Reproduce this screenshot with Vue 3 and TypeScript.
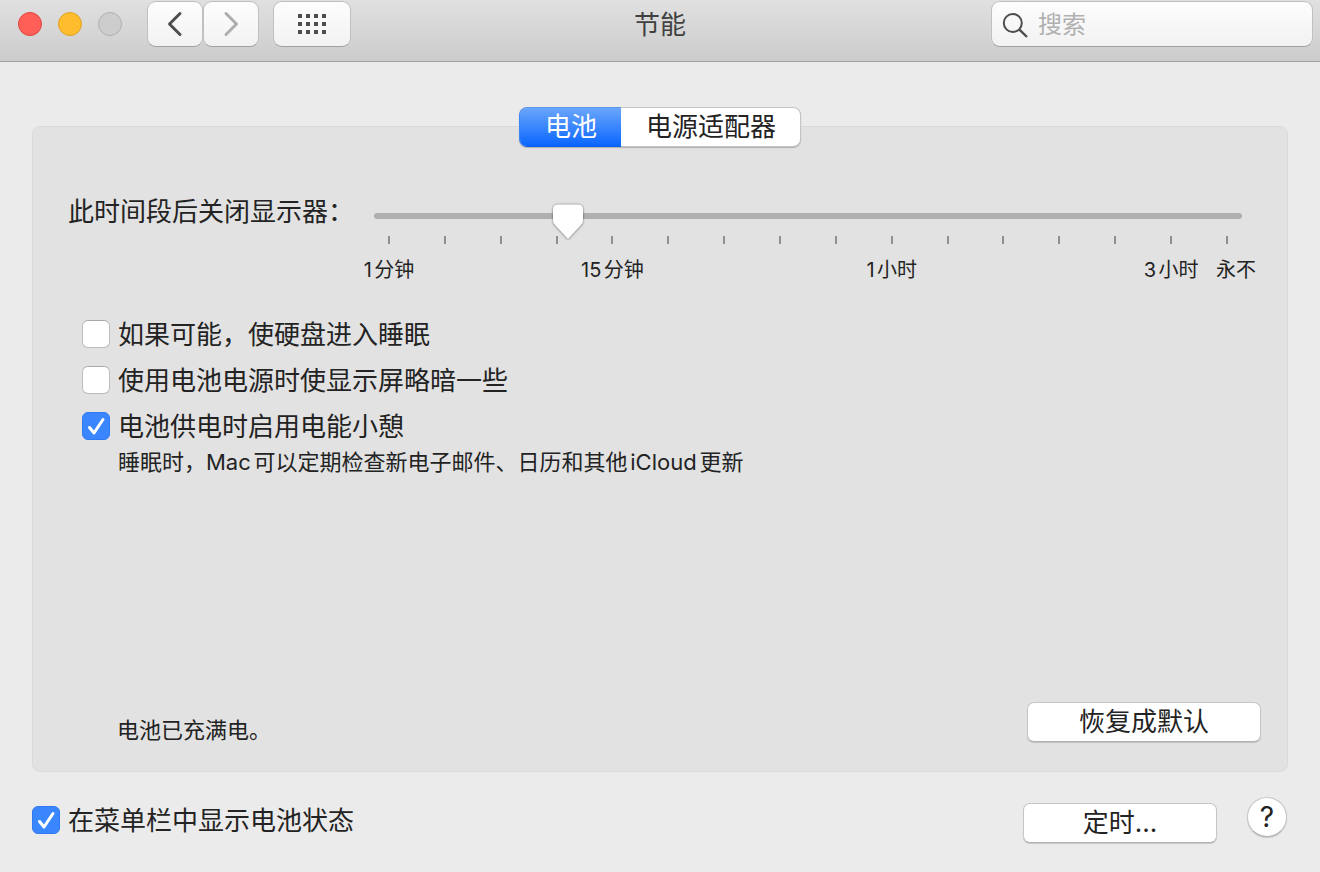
<script setup lang="ts">
import { ref } from 'vue'

interface Option {
  id: string
  label: string
  checked: boolean
  note?: string
}

const tabs: string[] = ['电池', '电源适配器']
const activeTab = ref(0)
const query = ref('')
const delay = ref(3.2)
const showStatus = ref(true)

const tickLabels: Record<number, string> = {
  0: '1分钟',
  4: '15分钟',
  9: '1小时',
  14: '3小时',
  15: '永不',
}
const ticks = Array.from({ length: 16 }, (_, i) => ({ id: i, label: tickLabels[i] ?? '' }))

const options = ref<Option[]>([
  { id: 'disk', label: '如果可能，使硬盘进入睡眠', checked: false },
  { id: 'dim', label: '使用电池电源时使显示屏略暗一些', checked: false },
  {
    id: 'nap',
    label: '电池供电时启用电能小憩',
    checked: true,
    note: '睡眠时，Mac可以定期检查新电子邮件、日历和其他iCloud更新',
  },
])

const dots = Array.from({ length: 12 }, (_, i) => ({ x: (i % 4) * 8, y: Math.floor(i / 4) * 8 }))
</script>

<template>
  <div class="window">
    <header class="toolbar">
      <div class="controls">
        <div class="lights">
          <button class="light red" type="button" aria-label="关闭"></button>
          <button class="light yellow" type="button" aria-label="最小化"></button>
          <button class="light gray" type="button" aria-label="缩放" disabled></button>
        </div>
        <div class="nav">
          <button class="tool" type="button" aria-label="后退">
            <svg width="16" height="26" viewBox="0 0 16 26" fill="none" stroke="#4d4d4d" stroke-width="3" stroke-linecap="round" stroke-linejoin="round">
              <path d="M13 2.5 2.5 13 13 23.5" />
            </svg>
          </button>
          <button class="tool" type="button" aria-label="前进">
            <svg width="16" height="26" viewBox="0 0 16 26" fill="none" stroke="#adadad" stroke-width="3" stroke-linecap="round" stroke-linejoin="round">
              <path d="M3 2.5 13.5 13 3 23.5" />
            </svg>
          </button>
        </div>
        <button class="tool wide" type="button" aria-label="全部显示">
          <svg width="28" height="20" viewBox="0 0 28 20" fill="#4d4d4d" shape-rendering="crispEdges">
            <rect v-for="(d, i) in dots" :key="i" :x="d.x" :y="d.y" width="4" height="4" />
          </svg>
        </button>
      </div>
      <h1 class="title">节能</h1>
      <label class="search">
        <svg width="28" height="28" viewBox="0 0 28 28" fill="none" stroke="#4d4d4d" stroke-width="2">
          <circle cx="10.800" cy="13" r="9" />
          <path d="M17.200 19.400 25 27" stroke-width="2.400" />
        </svg>
        <input v-model="query" type="text" placeholder="搜索" aria-label="搜索" />
      </label>
    </header>

    <main class="content">
      <div class="tabs" role="tablist">
        <button
          v-for="(tab, i) in tabs"
          :key="tab"
          class="tab"
          :class="{ active: i === activeTab }"
          type="button"
          role="tab"
          :aria-selected="i === activeTab"
          @click="activeTab = i"
        >{{ tab }}</button>
      </div>

      <section class="panel">
        <div class="delay">
          <label class="delay-label" for="delay">此时间段后关闭显示器：</label>
          <div class="slider">
            <input id="delay" v-model.number="delay" type="range" min="0" max="15" step="0.1" />
            <div class="ticks">
              <div v-for="t in ticks" :key="t.id" class="tick">
                <span class="mark"></span>
                <span v-if="t.label" class="tick-label">{{ t.label }}</span>
              </div>
            </div>
          </div>
        </div>

        <div class="options">
          <div v-for="o in options" :key="o.id" class="option">
            <label class="check">
              <input v-model="o.checked" type="checkbox" />
              <span>{{ o.label }}</span>
            </label>
            <p v-if="o.note" class="note">{{ o.note }}</p>
          </div>
        </div>

        <div class="panel-foot">
          <p class="status">电池已充满电。</p>
          <button class="push restore" type="button">恢复成默认</button>
        </div>
      </section>
    </main>

    <footer class="foot">
      <label class="check">
        <input v-model="showStatus" type="checkbox" />
        <span>在菜单栏中显示电池状态</span>
      </label>
      <div class="foot-actions">
        <button class="push schedule" type="button">定时...</button>
        <button class="help" type="button" aria-label="帮助">?</button>
      </div>
    </footer>
  </div>
</template>

<style>
body {
  margin: 0;
  background: #ebebeb;
}
</style>

<style scoped>
.window {
  box-sizing: border-box;
  display: flex;
  flex-direction: column;
  min-height: 100vh;
  background: #ebebeb;
  color: #232323;
  font-family: Inter, "Noto Sans CJK SC", sans-serif;
  font-size: 26px;
  line-height: 32px;
  text-autospace: normal;
}
.window *,
.window *::before {
  box-sizing: border-box;
}
button,
input {
  margin: 0;
  padding: 0;
  border: 0;
  font: inherit;
  color: inherit;
}
p,
h1 {
  margin: 0;
}

.toolbar {
  display: grid;
  grid-template-columns: 1fr auto 1fr;
  align-items: start;
  height: 62px;
  padding-top: 1px;
  background: linear-gradient(#e0e0e0, #cccccc);
  border-bottom: 1px solid #a3a3a3;
}
.controls {
  display: flex;
  align-items: center;
  padding-left: 18px;
}
.lights {
  display: flex;
  gap: 16px;
  margin-right: 25px;
}
.light {
  width: 24px;
  height: 24px;
  border: 1px solid;
  border-radius: 50%;
}
.red {
  background: #ff5f57;
  border-color: #e0443e;
}
.yellow {
  background: #ffbd2e;
  border-color: #dea123;
}
.gray {
  background: #cdcdcd;
  border-color: #b0b0b0;
}
.nav {
  display: flex;
  margin-right: 14px;
}
.tool {
  display: flex;
  align-items: center;
  justify-content: center;
  width: 56px;
  height: 46px;
  border: 1px solid #c0c0c0;
  border-bottom-color: #a0a0a0;
  border-radius: 9px;
  background: linear-gradient(#fdfdfd, #f2f2f2);
}
.tool svg {
  display: block;
}
.wide {
  width: 78px;
}
.title {
  padding-top: 8px;
  font-size: 26px;
  font-weight: 400;
  color: #404040;
}
.search {
  justify-self: end;
  display: flex;
  align-items: center;
  gap: 8px;
  width: 322px;
  height: 46px;
  margin-right: 7px;
  padding: 0 10px;
  border: 1px solid #c0c0c0;
  border-bottom-color: #a0a0a0;
  border-radius: 9px;
  background: linear-gradient(#fdfdfd, #f2f2f2);
}
.search svg {
  flex: none;
}
.search input {
  flex: 1;
  min-width: 0;
  height: 36px;
  background: transparent;
  outline: none;
  font-size: 24px;
}
.search input::placeholder {
  color: #b0b0b0;
  opacity: 1;
}

.content {
  flex: 1;
  display: flex;
  flex-direction: column;
  padding: 46px 32px 0;
}
.tabs {
  position: relative;
  z-index: 1;
  align-self: center;
  display: flex;
  height: 38px;
  border-radius: 7px;
  box-shadow: 0 0 0 1px #c4c4c4, 0 1px 1px 1px #b0b0b0;
}
.tab {
  padding: 0 24px 0 25px;
  background: #ffffff;
}
.tab:first-child {
  border-radius: 7px 0 0 7px;
}
.tab:last-child {
  border-radius: 0 7px 7px 0;
}
.tab.active {
  color: #ffffff;
  background: linear-gradient(#6aa6fb, #0a66ff);
  box-shadow: -1px 0 0 #3f86f5, 0 1px 0 #0a5fee, 0 -1px 0 #5a98f0;
}

.panel {
  flex: 1;
  display: flex;
  flex-direction: column;
  margin-top: -20px;
  padding: 69px 26px 29px 35px;
  border: 1px solid #dadada;
  border-radius: 8px;
  background: #e2e2e2;
}
.delay {
  display: flex;
  align-items: flex-start;
  gap: 20px;
  padding-right: 19px;
}
.delay-label {
  flex: none;
}
.slider {
  flex: 1;
  min-width: 0;
  padding-top: 8px;
}
.slider input {
  display: block;
  width: 100%;
  height: 24px;
  appearance: none;
  background: transparent;
  outline: none;
}
.slider input::-webkit-slider-runnable-track {
  height: 6px;
  border-radius: 3px;
  background: #afafaf;
}
.slider input::-webkit-slider-thumb {
  appearance: none;
  width: 30px;
  height: 35px;
  margin-top: -9px;
  border: 0;
  background: url("data:image/svg+xml,%3Csvg xmlns='http://www.w3.org/2000/svg' width='30' height='35' viewBox='0 0 30 35'%3E%3Cpath d='M5 .5h20q5 0 5 5v11q0 2.500-1.800 4.300L16 34q-1 1-2 0L1.800 20.800Q0 19 0 16.500V5.500Q0 .5 5 .5z' fill='%23fff'/%3E%3C/svg%3E") no-repeat;
  filter: drop-shadow(0 0 1px rgba(0, 0, 0, 0.45)) drop-shadow(0 1px 1px rgba(0, 0, 0, 0.15));
}
.ticks {
  display: flex;
  justify-content: space-between;
  height: 56px;
  padding: 8px 14px 0;
}
.tick {
  display: flex;
  flex-direction: column;
  align-items: center;
  width: 2px;
}
.mark {
  width: 2px;
  height: 8px;
  background: #8f8f8f;
}
.tick-label {
  padding-top: 12px;
  font-size: 20px;
  line-height: 28px;
  white-space: nowrap;
}
.tick:last-child .tick-label {
  padding-left: 18px;
}

.options {
  display: flex;
  flex-direction: column;
  gap: 14px;
  margin-top: 35px;
  padding-left: 14px;
}
.check {
  display: flex;
  align-items: center;
  gap: 8px;
}
.check input {
  flex: none;
  width: 28px;
  height: 28px;
  margin-bottom: 2px;
  appearance: none;
  border: 1px solid #bcbcbc;
  border-top-color: #aaaaaa;
  border-radius: 6px;
  background: #ffffff;
}
.check input:checked {
  border-color: #3079f3;
  background: #3a87fd url("data:image/svg+xml,%3Csvg xmlns='http://www.w3.org/2000/svg' width='26' height='26' viewBox='0 0 26 26'%3E%3Cpath d='M6.500 14.500 11 20 20 6.500' fill='none' stroke='%23fff' stroke-width='3' stroke-linecap='round' stroke-linejoin='round'/%3E%3C/svg%3E") center no-repeat;
}
.note {
  padding: 3px 0 0 36px;
  font-size: 22px;
}
.panel-foot {
  display: flex;
  align-items: flex-end;
  justify-content: space-between;
  margin-top: auto;
}
.status {
  padding-left: 49px;
  margin-bottom: -4px;
  font-size: 22px;
}
.push {
  height: 40px;
  border-radius: 7px;
  background: #ffffff;
  border: 1px solid #c6c6c6;
  border-bottom-color: #b0b0b0;
  box-shadow: 0 1px 1px rgba(0, 0, 0, 0.15);
}
.restore {
  width: 234px;
}
.foot {
  display: flex;
  justify-content: space-between;
  align-items: flex-start;
  height: 100px;
  padding: 25px 33px 0 32px;
}
.foot .check {
  padding-top: 8px;
}
.foot-actions {
  display: flex;
  gap: 30px;
}
.schedule {
  width: 194px;
  margin-top: 6px;
}
.help {
  width: 40px;
  height: 40px;
  border: 1px solid #c6c6c6;
  border-bottom-color: #b0b0b0;
  border-radius: 50%;
  background: #ffffff;
  box-shadow: 0 1px 1px rgba(0, 0, 0, 0.15);
  font-size: 28px;
}
</style>
